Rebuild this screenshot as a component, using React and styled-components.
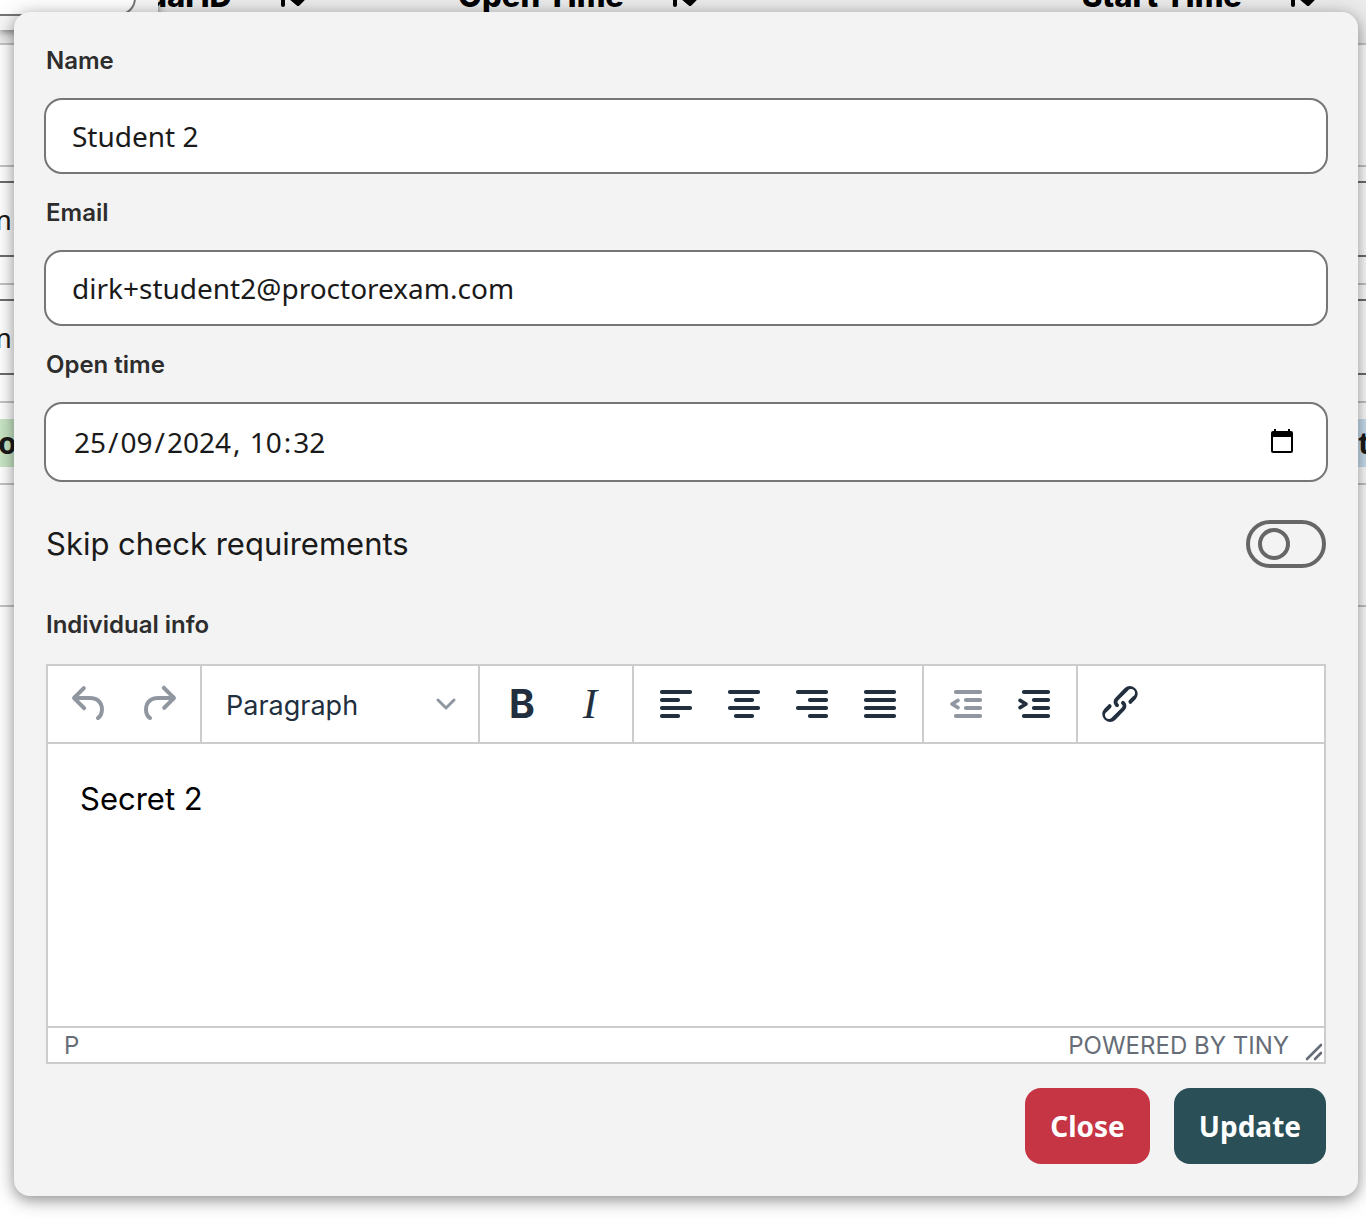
import React, { useState } from 'react'
import styled, { createGlobalStyle } from 'styled-components'

const GlobalStyle = createGlobalStyle`
  *,
  *::before {
    box-sizing: border-box;
  }

  body {
    margin: 0;
    background-color: #fff;
    font-family: Inter, 'Liberation Sans', sans-serif;
    color: #1a1a1a;
  }

  button,
  input,
  select,
  textarea {
    font-family: inherit;
    color: inherit;
    margin: 0;
  }
`

const Page = styled.div`
  position: relative;
  min-height: 100vh;
  overflow: hidden;
`

const Behind = styled.div`
  position: absolute;
  inset: 0;
  overflow: hidden;
  font-family: 'Noto Sans', sans-serif;
`

const TableHead = styled.div`
  display: flex;
  height: 45px;
  background-color: #ececec;
  border-bottom: 2px solid #c4c4c4;
`

const SearchCell = styled.div`
  display: flex;
  align-items: flex-end;
  width: 158px;
  height: 30px;
  padding: 0 22px 14px 0;
  background-color: #f6f6f6;
  box-shadow: 0 2px 8px rgba(0, 0, 0, 0.5);

  input {
    width: 100%;
    height: 76px;
    flex-shrink: 0;
    border: 2px solid #767676;
    border-left: none;
    border-radius: 0 18px 18px 0;
    background-color: #fff;
  }
`

const HeadCell = styled.div`
  display: flex;
  align-items: flex-end;
  justify-content: flex-end;
  gap: 48px;
  width: ${(props) => props.$width}px;
  height: 14px;
  overflow: hidden;
  font-family: Inter, sans-serif;
  font-size: 31px;
  font-weight: 800;
  line-height: 36px;
  white-space: nowrap;
  color: #000;

  svg {
    flex-shrink: 0;
    margin-bottom: 6px;
  }
`

const Row = styled.div`
  display: flex;
  align-items: flex-start;
  justify-content: space-between;
  height: ${(props) => props.$height}px;
  padding-top: 14px;
  border-bottom: 2px solid #c4c4c4;

  input {
    width: 40px;
    height: 76px;
    margin-left: -16px;
    padding: 0 12px 0 0;
    border: 2px solid #6e6e6e;
    border-width: 2px 0;
    background-color: #fff;
    font-size: 28px;
    text-align: right;
  }

  input:last-child {
    margin: 0 -24px 0 0;
  }
`

const TagRow = styled(Row)`
  align-items: center;
  padding-top: 0;
`

const Tag = styled.span`
  width: 32px;
  height: 48px;
  margin: ${(props) => (props.$end ? '0 -24px 0 0' : '0 0 0 -16px')};
  padding-left: ${(props) => (props.$end ? 0 : 14)}px;
  background-color: ${(props) => props.$color};
  font-size: 30px;
  font-weight: 700;
  line-height: 48px;
`

const Dialog = styled.form`
  position: relative;
  margin: 12px 8px 22px 14px;
  padding: 10px 30px 32px;
  border-radius: 16px;
  background-color: #f3f3f3;
  box-shadow: 0 4px 14px rgba(0, 0, 0, 0.36), 0 2px 28px rgba(0, 0, 0, 0.14);
`

const Label = styled.label`
  display: block;
  margin: 0 2px;
  padding: 23px 0 21px;
  font-size: 24px;
  font-weight: 600;
  line-height: 32px;
  color: #2d2d2d;
`

const TextInput = styled.input`
  display: block;
  width: 100%;
  height: 76px;
  padding: 0 26px;
  border: 2px solid #767676;
  border-radius: 18px;
  background-color: #fff;
  font-family: 'Noto Sans', sans-serif;
  font-size: 28px;
`

const DateField = styled.div`
  display: flex;
  align-items: center;
  height: 80px;
  padding: 0 31px 0 26px;
  border: 2px solid #767676;
  border-radius: 18px;
  background-color: #fff;
  font-family: 'Noto Sans', sans-serif;
  font-size: 28px;
  white-space: pre;

  button {
    display: flex;
    margin-left: auto;
    padding: 0;
    border: none;
    background-color: transparent;
  }
`

const DatePart = styled.input`
  box-sizing: content-box;
  width: ${(props) => props.maxLength}ch;
  padding: 0 2px;
  border: none;
  background-color: transparent;
  font-size: 28px;
`

const SwitchRow = styled.div`
  display: flex;
  align-items: center;
  justify-content: space-between;
  margin: 38px 2px 18px;
  font-size: 31px;
  line-height: 48px;
`

const Switch = styled.input`
  display: flex;
  appearance: none;
  width: 80px;
  height: 48px;
  padding: 4px 8px;
  border: 4px solid #666;
  border-radius: 24px;

  &::before {
    content: '';
    width: 32px;
    height: 32px;
    border: 4px solid #666;
    border-radius: 50%;
  }

  &:checked {
    justify-content: flex-end;
  }
`

const Editor = styled.div`
  margin: 2px 2px 0;
  border: 2px solid #ccc;
  background-color: #fff;
  color: #222f3e;
`

const Toolbar = styled.div`
  display: flex;
  height: 78px;
  border-bottom: 2px solid #ccc;
`

const ToolGroup = styled.div`
  display: flex;
  align-items: center;
  padding: 0 8px;
  border-right: 2px solid #ccc;

  &:last-child {
    border-right: none;
  }
`

const ToolButton = styled.button`
  display: flex;
  align-items: center;
  justify-content: center;
  width: 68px;
  height: 56px;
  padding: 0;
  border: none;
  background-color: transparent;
  color: ${(props) => (props.disabled ? '#9097a0' : '#222f3e')};
`

const BoldGlyph = styled.span`
  font-size: 39px;
  font-weight: 700;
  line-height: 48px;
`

const ItalicGlyph = styled.span`
  font-family: 'Liberation Serif', serif;
  font-size: 43px;
  font-style: italic;
  line-height: 48px;
`

const SelectWrap = styled.div`
  display: flex;
  align-items: center;
  width: 260px;

  select {
    flex: 1;
    height: 56px;
    padding: 2px 16px 0;
    border: none;
    appearance: none;
    background-color: transparent;
    font-size: 27px;
  }

  svg {
    margin: 0 14px 0 -36px;
    pointer-events: none;
  }
`

const EditorBody = styled.textarea`
  display: block;
  width: 100%;
  height: 282px;
  padding: 32px;
  border: none;
  outline: none;
  resize: none;
  font-size: 31px;
  line-height: 46px;
  color: #000;
`

const StatusBar = styled.div`
  display: flex;
  align-items: center;
  height: 36px;
  padding: 2px 0 0 16px;
  border-top: 2px solid #ccc;
  font-size: 24px;
  line-height: 32px;
  color: #666d77;

  a {
    margin-left: auto;
    color: inherit;
    text-decoration: none;
  }

  svg {
    margin: 12px 1px 0 16px;
  }
`

const Actions = styled.div`
  display: flex;
  justify-content: flex-end;
  gap: 24px;
  margin: 24px 2px 0;
`

const ActionButton = styled.button`
  height: 76px;
  padding: 0 25px;
  border: none;
  border-radius: 16px;
  background-color: ${(props) => (props.$danger ? '#c53544' : '#2a4f57')};
  color: #fff;
  font-family: 'Noto Sans', sans-serif;
  font-size: 28px;
  font-weight: 700;
`

const UNDO =
  'M6.4 8H12c3.7 0 6.2 2 6.8 5.1.6 2.7-.4 5.6-2.3 6.8a1 1 0 0 1-1-1.8c1.1-.6 1.8-2.7 1.4-4.6-.5-2.1-2.1-3.5-4.9-3.5H6.4l3.3 3.3a1 1 0 1 1-1.4 1.4l-5-5a1 1 0 0 1 0-1.4l5-5a1 1 0 0 1 1.4 1.4L6.4 8Z'
const REDO =
  'M17.6 10H12c-2.8 0-4.4 1.4-4.9 3.5-.4 2 .3 4 1.4 4.6a1 1 0 1 1-1 1.8c-2-1.2-2.9-4.1-2.3-6.8.6-3 3-5.1 6.8-5.1h5.6l-3.3-3.3a1 1 0 1 1 1.4-1.4l5 5a1 1 0 0 1 0 1.4l-5 5a1 1 0 0 1-1.4-1.4l3.3-3.3Z'
const LINK =
  'M6.2 12.3a1 1 0 0 1 1.4 1.4l-2 2a2 2 0 1 0 2.6 2.8l4.8-4.8a1 1 0 0 0 0-1.4 1 1 0 1 1 1.4-1.3 2.9 2.9 0 0 1 0 4L9.6 20a3.9 3.9 0 0 1-5.5-5.5l2-2Zm11.6-.6a1 1 0 0 1-1.4-1.4l2-2a2 2 0 1 0-2.6-2.8L11 10.3a1 1 0 0 0 0 1.4A1 1 0 1 1 9.6 13a2.9 2.9 0 0 1 0-4L14.4 4a3.9 3.9 0 0 1 5.5 5.5l-2 2Z'

// each bar is [x, width], from top to bottom
const BARS = {
  left: [[4, 16], [4, 10], [4, 16], [4, 10]],
  center: [[4, 16], [7, 10], [4, 16], [7, 10]],
  right: [[4, 16], [10, 10], [4, 16], [10, 10]],
  justify: [[4, 16], [4, 16], [4, 16], [4, 16]],
  indent: [[6, 14], [11, 9], [11, 9], [6, 14]]
}

const PathIcon = ({ d }) => (
  <svg width="48" height="48" viewBox="0 0 24 24" fill="currentColor">
    <path d={d} fillRule="evenodd" />
  </svg>
)

const BarsIcon = ({ bars, arrow }) => (
  <svg width="48" height="48" viewBox="0 0 24 24" fill="currentColor">
    {bars.map(([x, width], index) => (
      <rect key={index} x={x} y={5 + index * 4} width={width} height="2" rx="0.9" />
    ))}
    {arrow && (
      <path
        d={arrow}
        fill="none"
        stroke="currentColor"
        strokeWidth="1.8"
        strokeLinecap="round"
        strokeLinejoin="round"
      />
    )}
  </svg>
)

const SortIcon = () => (
  <svg width="28" height="28" viewBox="0 0 28 28" stroke="#000" strokeWidth="4" strokeLinecap="round" strokeLinejoin="round">
    <path d="M3 25V4" />
    <path d="M17 4v16M11 18h13l-6 6Z" />
  </svg>
)

const ALIGNMENTS = ['left', 'center', 'right', 'justify']

function TableBehind() {
  return (
    <Behind aria-hidden="true">
      <TableHead>
        <SearchCell>
          <input tabIndex={-1} readOnly />
        </SearchCell>
        <HeadCell $width={150}>
          ual ID
          <SortIcon />
        </HeadCell>
        <HeadCell $width={392}>
          Open Time
          <SortIcon />
        </HeadCell>
        <HeadCell $width={618}>
          Start Time
          <SortIcon />
        </HeadCell>
      </TableHead>
      <Row $height={122} />
      <Row $height={118}>
        <input tabIndex={-1} readOnly value="m" />
        <input tabIndex={-1} readOnly />
      </Row>
      <Row $height={118}>
        <input tabIndex={-1} readOnly value="m" />
        <input tabIndex={-1} readOnly />
      </Row>
      <TagRow $height={82}>
        <Tag $color="#c8e6c5">o</Tag>
        <Tag $color="#cbe0f0" $end>
          t
        </Tag>
      </TagRow>
      <Row $height={122} />
    </Behind>
  )
}

export default function App() {
  const [name, setName] = useState('Student 2')
  const [email, setEmail] = useState('dirk+student2@proctorexam.com')
  const [skip, setSkip] = useState(false)
  const [info, setInfo] = useState('Secret 2')

  return (
    <Page>
      <GlobalStyle />
      <TableBehind />
      <Dialog onSubmit={(evt) => evt.preventDefault()}>
        <Label htmlFor="name">Name</Label>
        <TextInput id="name" value={name} onChange={(evt) => setName(evt.target.value)} />
        <Label htmlFor="email">Email</Label>
        <TextInput id="email" value={email} onChange={(evt) => setEmail(evt.target.value)} />
        <Label htmlFor="open-day">Open time</Label>
        <DateField>
          <DatePart id="open-day" aria-label="Day" maxLength={2} defaultValue="25" />/
          <DatePart aria-label="Month" maxLength={2} defaultValue="09" />/
          <DatePart aria-label="Year" maxLength={4} defaultValue="2024" />
          <span>{', '}</span>
          <DatePart aria-label="Hours" maxLength={2} defaultValue="10" />:
          <DatePart aria-label="Minutes" maxLength={2} defaultValue="32" />
          <button type="button" aria-label="Pick a date">
            <svg width="26" height="26" viewBox="0 0 26 26">
              <path
                d="M5 0h2v2h12V0h2v2h1a2 2 0 0 1 2 2v18a2 2 0 0 1-2 2H4a2 2 0 0 1-2-2V4a2 2 0 0 1 2-2h1ZM4 8v14h18V8Z"
                fillRule="evenodd"
              />
            </svg>
          </button>
        </DateField>
        <SwitchRow>
          <label htmlFor="skip">Skip check requirements</label>
          <Switch
            id="skip"
            type="checkbox"
            role="switch"
            checked={skip}
            onChange={(evt) => setSkip(evt.target.checked)}
          />
        </SwitchRow>
        <Label htmlFor="info">Individual info</Label>
        <Editor>
          <Toolbar>
            <ToolGroup>
              <ToolButton type="button" aria-label="Undo" disabled>
                <PathIcon d={UNDO} />
              </ToolButton>
              <ToolButton type="button" aria-label="Redo" disabled>
                <PathIcon d={REDO} />
              </ToolButton>
            </ToolGroup>
            <ToolGroup>
              <SelectWrap>
                <select aria-label="Block format">
                  <option>Paragraph</option>
                </select>
                <svg width="20" height="12" viewBox="0 0 20 12" fill="none" stroke="#9097a0" strokeWidth="3" strokeLinecap="round" strokeLinejoin="round">
                  <path d="M2 2l8 8 8-8" />
                </svg>
              </SelectWrap>
            </ToolGroup>
            <ToolGroup>
              <ToolButton type="button" aria-label="Bold">
                <BoldGlyph>B</BoldGlyph>
              </ToolButton>
              <ToolButton type="button" aria-label="Italic">
                <ItalicGlyph>I</ItalicGlyph>
              </ToolButton>
            </ToolGroup>
            <ToolGroup>
              {ALIGNMENTS.map((side) => (
                <ToolButton key={side} type="button" aria-label={`Align ${side}`}>
                  <BarsIcon bars={BARS[side]} />
                </ToolButton>
              ))}
            </ToolGroup>
            <ToolGroup>
              <ToolButton type="button" aria-label="Decrease indent" disabled>
                <BarsIcon bars={BARS.indent} arrow="M8 10.200L5 12l3 1.800" />
              </ToolButton>
              <ToolButton type="button" aria-label="Increase indent">
                <BarsIcon bars={BARS.indent} arrow="M5 10.200L8 12l-3 1.800" />
              </ToolButton>
            </ToolGroup>
            <ToolGroup>
              <ToolButton type="button" aria-label="Link">
                <PathIcon d={LINK} />
              </ToolButton>
            </ToolGroup>
          </Toolbar>
          <EditorBody id="info" value={info} onChange={(evt) => setInfo(evt.target.value)} />
          <StatusBar>
            <span>P</span>
            <a href="#tiny">POWERED BY TINY</a>
            <svg width="18" height="18" viewBox="0 0 18 18" fill="none" stroke="#666d77" strokeWidth="2.600" strokeLinecap="round">
              <path d="M2 16L16 2M10 16l6-6" />
            </svg>
          </StatusBar>
        </Editor>
        <Actions>
          <ActionButton type="button" $danger>
            Close
          </ActionButton>
          <ActionButton type="submit">Update</ActionButton>
        </Actions>
      </Dialog>
    </Page>
  )
}
